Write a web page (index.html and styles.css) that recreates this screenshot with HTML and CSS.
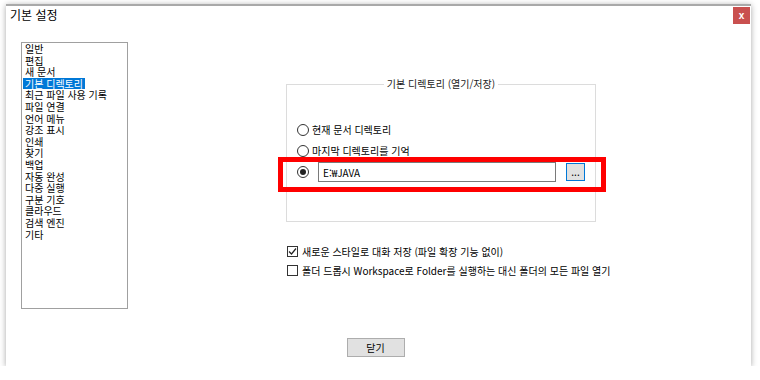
FILE: index.html
```html
<!DOCTYPE html>
<html lang="ko">
<head>
  <meta charset="UTF-8">
  <title>기본 설정</title>
  <link rel="stylesheet" href="styles.css">
</head>
<body>

  <div class="window">
    <div class="titlebar">
      <span class="title">기본 설정</span>
      <button class="close-x">x</button>
    </div>

    <div class="body">
      <!-- 왼쪽 목록 -->
      <div class="list">
        <div class="item">일반</div>
        <div class="item">편집</div>
        <div class="item">새 문서</div>
        <div class="item selected">기본 디렉토리</div>
        <div class="item">최근 파일 사용 기록</div>
        <div class="item">파일 연결</div>
        <div class="item">언어 메뉴</div>
        <div class="item">강조 표시</div>
        <div class="item">인쇄</div>
        <div class="item">찾기</div>
        <div class="item">백업</div>
        <div class="item">자동 완성</div>
        <div class="item">다중 실행</div>
        <div class="item">구분 기호</div>
        <div class="item">클라우드</div>
        <div class="item">검색 엔진</div>
        <div class="item">기타</div>
      </div>

      <div class="main">
        <fieldset class="group">
          <legend>기본 디렉토리 (열기/저장)</legend>
          <div class="row"><span class="radio"></span>현재 문서 디렉토리</div>
          <div class="row"><span class="radio"></span>마지막 디렉토리를 기억</div>
          <div class="row path-row">
            <span class="radio checked"></span>
            <input class="path" type="text" value="E:₩JAVA">
            <button class="browse">...</button>
          </div>
          <!-- 강조 표시용 빨간 테두리 -->
          <div class="mark"></div>
        </fieldset>

        <div class="checks">
          <div class="check-row">
            <span class="box">
              <svg width="9" height="9" viewBox="0 0 9 9"><polyline points="1,4.5 3.5,7 8,1.5" fill="none" stroke="#222" stroke-width="1.2"/></svg>
            </span>
            새로운 스타일로 대화 저장 (파일 확장 기능 없이)
          </div>
          <div class="check-row">
            <span class="box"></span>
            폴더 드롭시 Workspace로 Folder를 실행하는 대신 폴더의 모든 파일 열기
          </div>
        </div>
      </div>
    </div>

    <div class="footer">
      <button class="btn">닫기</button>
    </div>
  </div>

</body>
</html>
```

FILE: styles.css
```css
* {
  box-sizing: border-box;
  margin: 0;
  padding: 0;
}

body {
  background: #fff;
  font-family: 'Noto Sans CJK KR', 'Noto Sans', sans-serif;
  font-size: 10px;
  color: #000;
  overflow: hidden;
}

.window {
  margin: 4px 0 0 6px;
  width: 745px;
  height: 362px;
  background: #fff;
  border-top: 2px solid #a9a9a9;
  box-shadow: 0 1px 6px rgba(0, 0, 0, 0.35);
  display: flex;
  flex-direction: column;
}

.titlebar {
  height: 36px;
  flex-shrink: 0;
  display: flex;
  justify-content: space-between;
  align-items: flex-start;
}

.title {
  font-size: 12px;
  line-height: 18px;
  padding-left: 4px;
}

.close-x {
  width: 17px;
  height: 17px;
  margin: 1px 1px 0 0;
  border: none;
  background: #c9504f;
  color: #fff;
  font-family: 'Liberation Sans', sans-serif;
  font-weight: bold;
  font-size: 10px;
  line-height: 15px;
}

.body {
  display: flex;
  height: 267px;
  flex-shrink: 0;
}

.list {
  width: 107px;
  height: 267px;
  margin-left: 15px;
  border: 1px solid #a0a0a0;
  padding: 0 0 0 1px;
}

.item {
  width: fit-content;
  height: 11.6px;
  line-height: 11.6px;
  padding: 0 2px;
  white-space: nowrap;
}

.item.selected {
  background: #0078d7;
  color: #fff;
}

.main {
  margin-left: 158px;
  padding-top: 35px;
}

.group {
  position: relative;
  width: 309px;
  height: 145px;
  border: 1px solid #dcdcdc;
  padding: 28px 10px 0;
}

.group legend {
  margin: 0 auto;
  padding: 0 3px;
  line-height: 14px;
  color: #222;
}

.row {
  display: flex;
  align-items: center;
  height: 21px;
  gap: 3px;
}

.radio {
  width: 12px;
  height: 12px;
  border: 1px solid #333;
  border-radius: 50%;
  background: #fff;
  display: flex;
  align-items: center;
  justify-content: center;
}

.radio.checked::after {
  content: '';
  width: 6px;
  height: 6px;
  border-radius: 50%;
  background: #222;
}

.path-row {
  height: 22px;
  gap: 0;
}

.path {
  width: 238px;
  height: 20px;
  margin-left: 9px;
  border: 1px solid #7a7a7a;
  padding: 0 4px;
  font-family: inherit;
  font-size: 10px;
  color: #000;
  outline: none;
}

.browse {
  width: 19px;
  height: 18px;
  margin: 0 0 1px 10px;
  border: 1px solid #0078d7;
  background: #e1e1e1;
  font-family: inherit;
  font-size: 10px;
  line-height: 10px;
  color: #000;
}

.mark {
  position: absolute;
  left: -9px;
  top: 66px;
  width: 328px;
  height: 35px;
  border: 5px solid #ff0000;
}

.checks {
  margin-top: 20px;
  margin-left: 1px;
}

.check-row {
  display: flex;
  align-items: center;
  gap: 4px;
  height: 19px;
  white-space: nowrap;
}

.box {
  width: 11px;
  height: 11px;
  border: 1px solid #333;
  display: flex;
  align-items: center;
  justify-content: center;
}

.footer {
  display: flex;
  justify-content: center;
  padding: 29px 6px 0 0;
}

.btn {
  width: 58px;
  height: 19px;
  border: 1px solid #adadad;
  background: #e1e1e1;
  font-family: inherit;
  font-size: 10px;
  color: #000;
}
```
